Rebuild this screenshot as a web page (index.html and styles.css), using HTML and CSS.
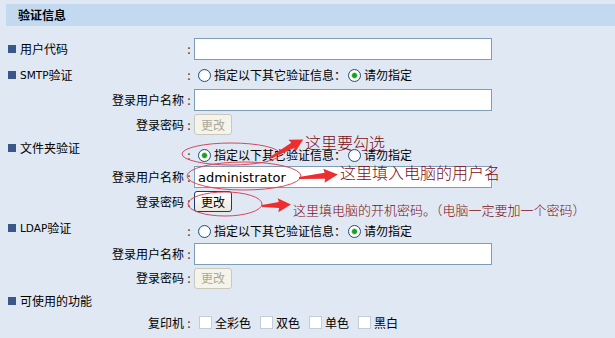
FILE: index.html
```html
<!DOCTYPE html>
<html lang="zh-CN">
<head>
    <meta charset="UTF-8">
    <title>验证信息</title>
    <link rel="stylesheet" href="styles.css">
</head>
<body>
    <div class="page">
        <div class="section-title">验证信息</div>

        <form class="form">
            <div class="row r1">
                <span class="label main"><i class="bullet"></i>用户代码</span>
                <span class="colon">:</span>
                <div class="value"><input type="text" class="text-field"></div>
            </div>

            <div class="row r2">
                <span class="label main"><i class="bullet"></i><span class="latin">SMTP</span>验证</span>
                <span class="colon">:</span>
                <div class="value">
                    <label class="opt"><input type="radio" name="smtp">指定以下其它验证信息：</label>
                    <label class="opt"><input type="radio" name="smtp" checked>请勿指定</label>
                </div>
            </div>
            <div class="row r3">
                <span class="label">登录用户名称</span>
                <span class="colon">:</span>
                <div class="value"><input type="text" class="text-field"></div>
            </div>
            <div class="row r4">
                <span class="label">登录密码</span>
                <span class="colon">:</span>
                <div class="value"><button type="button" class="btn" disabled>更改</button></div>
            </div>

            <div class="row r5 group-head">
                <span class="label main"><i class="bullet"></i>文件夹验证</span>
                <span class="colon">:</span>
                <div class="value">
                    <label class="opt"><input type="radio" name="folder" checked>指定以下其它验证信息：</label>
                    <label class="opt"><input type="radio" name="folder">请勿指定</label>
                </div>
            </div>
            <div class="row r6">
                <span class="label">登录用户名称</span>
                <span class="colon">:</span>
                <div class="value"><input type="text" class="text-field" value="administrator"></div>
            </div>
            <div class="row r7">
                <span class="label">登录密码</span>
                <span class="colon">:</span>
                <div class="value"><button type="button" class="btn">更改</button></div>
            </div>

            <div class="row r8 group-head">
                <span class="label main"><i class="bullet"></i><span class="latin">LDAP</span>验证</span>
                <span class="colon">:</span>
                <div class="value">
                    <label class="opt"><input type="radio" name="ldap">指定以下其它验证信息：</label>
                    <label class="opt"><input type="radio" name="ldap" checked>请勿指定</label>
                </div>
            </div>
            <div class="row r9">
                <span class="label">登录用户名称</span>
                <span class="colon">:</span>
                <div class="value"><input type="text" class="text-field"></div>
            </div>
            <div class="row r10">
                <span class="label">登录密码</span>
                <span class="colon">:</span>
                <div class="value"><button type="button" class="btn" disabled>更改</button></div>
            </div>

            <div class="row r11">
                <span class="label main"><i class="bullet"></i>可使用的功能</span>
            </div>
            <div class="row r12">
                <span class="label">复印机</span>
                <span class="colon">:</span>
                <div class="value checks">
                    <label class="chk"><input type="checkbox">全彩色</label>
                    <label class="chk"><input type="checkbox">双色</label>
                    <label class="chk"><input type="checkbox">单色</label>
                    <label class="chk"><input type="checkbox">黑白</label>
                </div>
            </div>
            <div class="row r13">
                <span class="label">彩色复印模式限制</span>
                <span class="colon">:</span>
                <div class="value">
                    <label class="opt dim"><input type="radio" name="mode" disabled></label>
                    <label class="opt dim wide"><input type="radio" name="mode" disabled></label>
                </div>
            </div>
        </form>

        <!-- hand-drawn notes on top of the form -->
        <svg class="marks" width="615" height="338" viewBox="0 0 615 338">
            <ellipse cx="231" cy="154" rx="49" ry="11" />
            <ellipse cx="244" cy="176" rx="57" ry="14" />
            <ellipse cx="225" cy="204" rx="37" ry="12" />
            <g class="arrow" transform="translate(270 158) rotate(-29)">
                <polygon points="0,-1 26,-3 25,-7 38,0 25,7 26,3 0,1" />
            </g>
            <g class="arrow" transform="translate(299 178) rotate(-5)">
                <polygon points="0,-1 26,-3 25,-7 39,0 25,7 26,3 0,1" />
            </g>
            <g class="arrow" transform="translate(262 206) rotate(-3)">
                <polygon points="0,-1 17,-3 16,-7 29,0 16,7 17,3 0,1" />
            </g>
        </svg>
        <div class="note note-1">这里要勾选</div>
        <div class="note note-2">这里填入电脑的用户名</div>
        <div class="note note-3">这里填电脑的开机密码。（电脑一定要加一个密码）</div>
    </div>
</body>
</html>
```

FILE: styles.css
```css
* {
    margin: 0;
    padding: 0;
    box-sizing: border-box;
}

body {
    background: #dfe8f3;
    font-family: "Noto Sans CJK SC", "Liberation Sans", sans-serif;
    font-size: 12px;
    color: #000;
    overflow: hidden;
}

.page {
    position: relative;
    width: 615px;
    height: 338px;
    padding-top: 4px;
    overflow: hidden;
}

.section-title {
    margin-left: 6px;
    height: 22px;
    line-height: 22px;
    padding-left: 12px;
    background: #c3d9ef;
    font-weight: bold;
    font-size: 12px;
}

.form {
    margin-top: 10px;
}

.row {
    display: grid;
    grid-template-columns: 184px 10px 1fr;
    align-items: center;
    line-height: 14px;
}

.r1 { height: 26px; }
.r2 { height: 26px; }
.r3 { height: 24px; }
.r4 { height: 25px; }
.r5 { height: 28px; }
.r6 { height: 24px; }
.r7 { height: 25px; }
.r8 { height: 28px; }
.r9 { height: 24px; }
.r10 { height: 24px; }
.r11 { height: 21px; }
.r12 { height: 23px; }
.r13 { height: 23px; }

.label {
    text-align: right;
    white-space: nowrap;
}

.label.main {
    text-align: left;
    padding-left: 8px;
    display: flex;
    align-items: center;
}

.latin {
    font-family: "DejaVu Sans", sans-serif;
    font-size: 10.5px;
}

.bullet {
    display: inline-block;
    width: 8px;
    height: 8px;
    background: #3b5688;
    margin-right: 4px;
}

.colon {
    text-align: center;
    color: #333;
}

.value {
    display: flex;
    align-items: center;
}

.r5 .label {
    align-self: start;
    padding-top: 4px;
}

.r5 .colon,
.r5 .value {
    align-self: end;
    height: 20px;
    line-height: 20px;
}

.r8 .colon,
.r8 .value {
    padding-top: 6px;
}

.text-field {
    width: 298px;
    height: 22px;
    border: 1px solid #7f9db9;
    background: #fff;
    padding: 0 3px;
    font-family: "DejaVu Sans", sans-serif;
    font-size: 13px;
    color: #000;
    outline: none;
}

.btn {
    width: 38px;
    height: 21px;
    font-family: "Noto Sans CJK SC", sans-serif;
    font-size: 12px;
    border-radius: 3px;
    border: 1px solid #163d6e;
    background: linear-gradient(#ffffff, #ece9dc);
    color: #000;
    line-height: 18px;
}

.btn:disabled {
    border-color: #cac8bb;
    background: #f5f4ea;
    color: #aca899;
}

.opt,
.chk {
    display: flex;
    align-items: center;
    white-space: nowrap;
}

input[type="radio"] {
    appearance: none;
    width: 13px;
    height: 13px;
    border: 1px solid #1c5180;
    border-radius: 50%;
    background: radial-gradient(circle at 60% 60%, #ffffff 40%, #e3e3dd);
    margin: 0 3px 0 4px;
}

input[type="radio"]:checked {
    background: radial-gradient(circle, #1f9d1f 0 2px, #7bd07b 2.6px, #ffffff 3.4px, #ffffff 55%, #e3e3dd);
}

.opt + .opt input[type="radio"] {
    margin-left: 2px;
}

.opt.dim input[type="radio"] {
    border-color: #c9ccd2;
    background: #f2f2ee;
    margin-left: 8px;
}

.opt.dim.wide input[type="radio"] {
    margin-left: 104px;
}

.checks {
    gap: 9px;
}

input[type="checkbox"] {
    appearance: none;
    width: 13px;
    height: 13px;
    border: 1px solid #c3ccd8;
    background: #fff;
    margin: 0 3px 0 5px;
}

.checks .chk + .chk input[type="checkbox"] {
    margin-left: 0;
}

.marks {
    position: absolute;
    top: 0;
    left: 0;
    pointer-events: none;
}

.marks ellipse {
    fill: none;
    stroke: #d8485c;
    stroke-width: 1;
}

.arrow polygon {
    fill: #ee2e2e;
}

.note {
    position: absolute;
    color: #7d0c12;
    font-weight: 300;
    white-space: nowrap;
    line-height: 1;
}

.note-1 {
    left: 305px;
    top: 134px;
    font-size: 16px;
}

.note-2 {
    left: 340px;
    top: 164px;
    font-size: 16px;
}

.note-3 {
    left: 293px;
    top: 203px;
    font-size: 13px;
}
```
